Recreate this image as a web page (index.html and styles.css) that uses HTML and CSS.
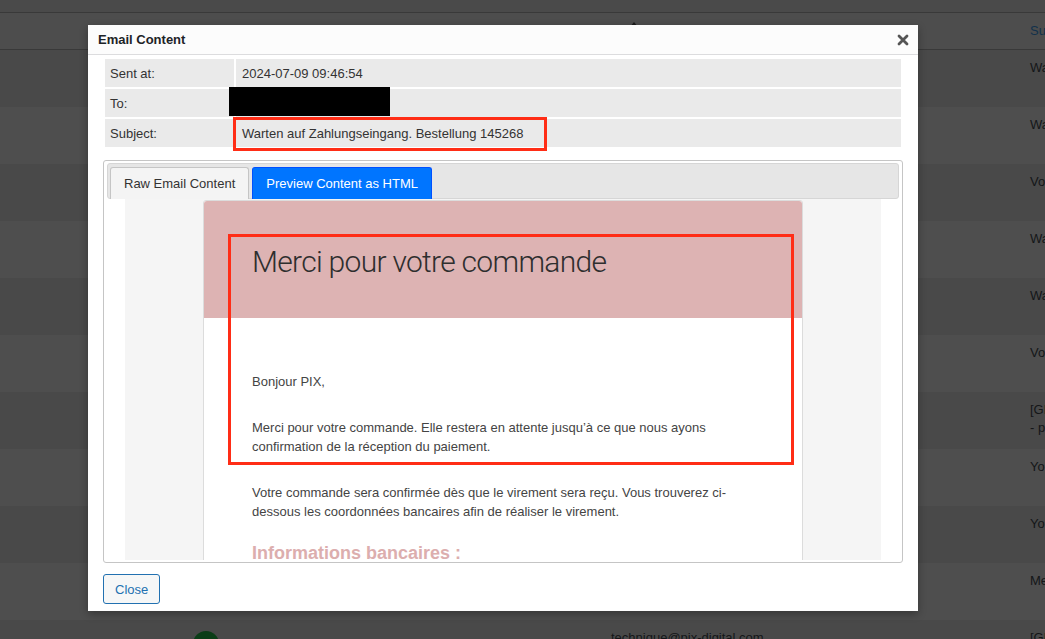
FILE: index.html
```html
<!DOCTYPE html>
<html lang="en">
<head>
    <meta charset="UTF-8">
    <meta name="viewport" content="width=device-width, initial-scale=1.0">
    <title>Email Log</title>
    <link rel="stylesheet" href="styles.css">
</head>
<body>
    <div class="admin">
        <div class="admin-bar"></div>
        <div class="list-head">
            <div class="cell"></div>
            <div class="cell"></div>
            <div class="cell"><span class="sort-arrow"></span></div>
            <div class="cell"><a href="#" class="col-link">Subject</a></div>
        </div>
        <div class="list-row"><div class="cell subject">Warten auf Zahlungseingang. Bestellung 145268</div></div>
        <div class="list-row"><div class="cell subject">Warten auf Zahlungseingang. Bestellung 145267</div></div>
        <div class="list-row"><div class="cell subject">Votre commande a été reçue</div></div>
        <div class="list-row"><div class="cell subject">Warten auf Zahlungseingang. Bestellung 145266</div></div>
        <div class="list-row"><div class="cell subject">Warten auf Zahlungseingang. Bestellung 145265</div></div>
        <div class="list-row"><div class="cell subject">Votre commande a été reçue</div></div>
        <div class="list-row"><div class="cell subject">[GMD] Nouvelle commande<br>- paiement en attente</div></div>
        <div class="list-row"><div class="cell subject">Your order has been received</div></div>
        <div class="list-row"><div class="cell subject">Your order has been received</div></div>
        <div class="list-row"><div class="cell subject">Merci pour votre commande</div></div>
        <div class="list-row">
            <div class="cell"></div>
            <div class="cell"><span class="status-dot"></span></div>
            <div class="cell">technique@pix-digital.com</div>
            <div class="cell">[GMD] Nouvelle commande</div>
        </div>
    </div>

    <div class="modal">
        <div class="modal-head">
            <h3 class="modal-title">Email Content</h3>
            <span class="modal-close">
                <svg width="12" height="12" viewBox="0 0 12 12"><path d="M2 2L10 10M10 2L2 10" stroke="#555" stroke-width="2.8" stroke-linecap="round"/></svg>
            </span>
        </div>
        <div class="modal-body">
            <table class="email-meta">
                <tr><td class="meta-label">Sent at:</td><td class="meta-value">2024-07-09 09:46:54</td></tr>
                <tr><td class="meta-label">To:</td><td class="meta-value"><span class="redacted"></span></td></tr>
                <tr><td class="meta-label">Subject:</td><td class="meta-value"><span class="mark mark-subject"></span>Warten auf Zahlungseingang. Bestellung 145268</td></tr>
            </table>

            <div class="tabs">
                <ul class="tab-nav">
                    <li class="tab">Raw Email Content</li>
                    <li class="tab active">Preview Content as HTML</li>
                </ul>
                <div class="tab-panel">
                    <div class="preview">
                        <div class="mail">
                            <div class="mail-header">
                                <h1>Merci pour votre commande</h1>
                            </div>
                            <div class="mail-body">
                                <p>Bonjour PIX,</p>
                                <p>Merci pour votre commande. Elle restera en attente jusqu’à ce que nous ayons confirmation de la réception du paiement.</p>
                                <p>Votre commande sera confirmée dès que le virement sera reçu. Vous trouverez ci-dessous les coordonnées bancaires afin de réaliser le virement.</p>
                                <h2>Informations bancaires :</h2>
                            </div>
                            <span class="mark mark-intro"></span>
                        </div>
                    </div>
                </div>
            </div>

            <button class="button">Close</button>
        </div>
    </div>
</body>
</html>
```

FILE: styles.css
```css
html, body {
    margin: 0;
    height: 100%;
    overflow: hidden;
}
body {
    font-family: "Liberation Sans", Arial, sans-serif;
    font-size: 13px;
    color: #141618;
    background-color: #4a4a4a;
    position: relative;
}

/* list behind the dialog */
.admin {
    width: 1045px;
    height: 639px;
    overflow: hidden;
}
.admin-bar {
    height: 12px;
    border-bottom: 1px solid #393939;
}
.list-head, .list-row {
    display: grid;
    grid-template-columns: 185px 418px 419px 1fr;
}
.list-head {
    height: 36px;
    background-color: #4d4d4d;
    border-bottom: 1px solid #393939;
}
.list-head .cell {
    padding: 9px 8px;
    line-height: 18px;
    white-space: nowrap;
}
.sort-arrow {
    display: block;
    width: 0;
    height: 0;
    margin: 0 0 0 19px;
    border-left: 4px solid transparent;
    border-right: 4px solid transparent;
    border-bottom: 5px solid #1c1c1c;
}
.col-link {
    color: #12314b;
    text-decoration: none;
}
.list-row {
    height: 57px;
    background-color: #494949;
}
.list-row:nth-child(even) {
    background-color: #4e4e4e;
}
.list-row .cell {
    padding: 9px 8px;
    line-height: 18px;
    white-space: nowrap;
}
.list-row .subject {
    grid-column: 4;
}
.status-dot {
    display: block;
    width: 26px;
    height: 26px;
    margin-top: 2px;
    border-radius: 50%;
    background-color: #0b3d17;
}

/* dialog */
.modal {
    position: absolute;
    top: 25px;
    left: 88px;
    width: 830px;
    background-color: #fff;
    box-shadow: 0 3px 8px rgba(0, 0, 0, 0.3);
}
.modal-head {
    height: 29px;
    padding: 0 9px 0 10px;
    background-color: #fcfcfc;
    border-bottom: 1px solid #dcdcde;
    display: flex;
    align-items: center;
    justify-content: space-between;
}
.modal-title {
    margin: 0;
    font-size: 13px;
    font-weight: bold;
    color: #1d2327;
}
.modal-close {
    display: flex;
}
.modal-body {
    padding: 2px 15px 7px;
}
.email-meta {
    width: 100%;
    border-collapse: separate;
    border-spacing: 2px;
}
.email-meta td {
    height: 28px;
    padding: 0 6px;
    background-color: #eaeaea;
    color: #333;
    font-size: 13px;
}
.meta-label {
    width: 118px;
    padding-left: 5px !important;
}
.meta-value {
    position: relative;
}
.redacted {
    position: absolute;
    left: -7px;
    top: -2px;
    width: 161px;
    height: 29px;
    background-color: #000;
}
.mark {
    position: absolute;
    box-sizing: border-box;
    border: 3px solid #ff2d16;
}
.mark-subject {
    left: -3px;
    top: -2px;
    width: 314px;
    height: 34px;
}

/* tabs */
.tabs {
    margin-top: 11px;
    padding: 2px 0;
    border: 1px solid #c5c5c5;
    border-radius: 3px;
}
.tab-nav {
    display: flex;
    gap: 3px;
    margin: 0 3px;
    padding: 3px 2px 0;
    list-style: none;
    background-color: #e6e6e6;
    border: 1px solid #d6d6d6;
    border-radius: 3px;
}
.tab {
    height: 31px;
    line-height: 31px;
    padding: 0 13px;
    margin-bottom: -1px;
    border: 1px solid #c5c5c5;
    border-bottom: 0;
    border-radius: 3px 3px 0 0;
    background-color: #f4f4f4;
    color: #333;
    font-size: 13px;
}
.tab.active {
    background-color: #0075ff;
    border-color: #0050ff;
    color: #fff;
}
.tab-panel {
    height: 361px;
    padding: 0 21px;
    overflow: hidden;
}
.preview {
    height: 100%;
    padding-top: 1px;
    box-sizing: border-box;
    background-color: #f5f5f5;
    overflow: hidden;
}

/* email preview */
.mail {
    position: relative;
    width: 600px;
    margin: 0 auto;
    box-sizing: border-box;
    border: 1px solid #dcdcdc;
    border-radius: 3px 3px 0 0;
    background-color: #fff;
}
.mail-header {
    background-color: #ddb3b3;
    padding: 36px 48px;
    border-radius: 3px 3px 0 0;
}
.mail-header h1 {
    margin: 0;
    font-family: Roboto, "Liberation Sans", sans-serif;
    font-size: 30px;
    font-weight: 300;
    letter-spacing: -0.7px;
    line-height: 45px;
    color: #2e2e2e;
    position: relative;
    top: 2px;
}
.mail-body {
    padding: 54px 48px 0;
    color: #444;
    font-size: 13px;
    line-height: 19px;
}
.mail-body p {
    margin: 0 0 27px;
}
.mail-body h2 {
    margin: -6px 0 0;
    font-size: 18px;
    line-height: 22px;
    font-weight: bold;
    color: #dcaeae;
}
.mark-intro {
    left: 24px;
    top: 33px;
    width: 566px;
    height: 231px;
}

.button {
    margin-top: 11px;
    height: 30px;
    padding: 0 11px;
    font-family: "Liberation Sans", Arial, sans-serif;
    font-size: 13px;
    color: #2271b1;
    background-color: #f6f7f7;
    border: 1px solid #2271b1;
    border-radius: 3px;
    cursor: pointer;
}
```
